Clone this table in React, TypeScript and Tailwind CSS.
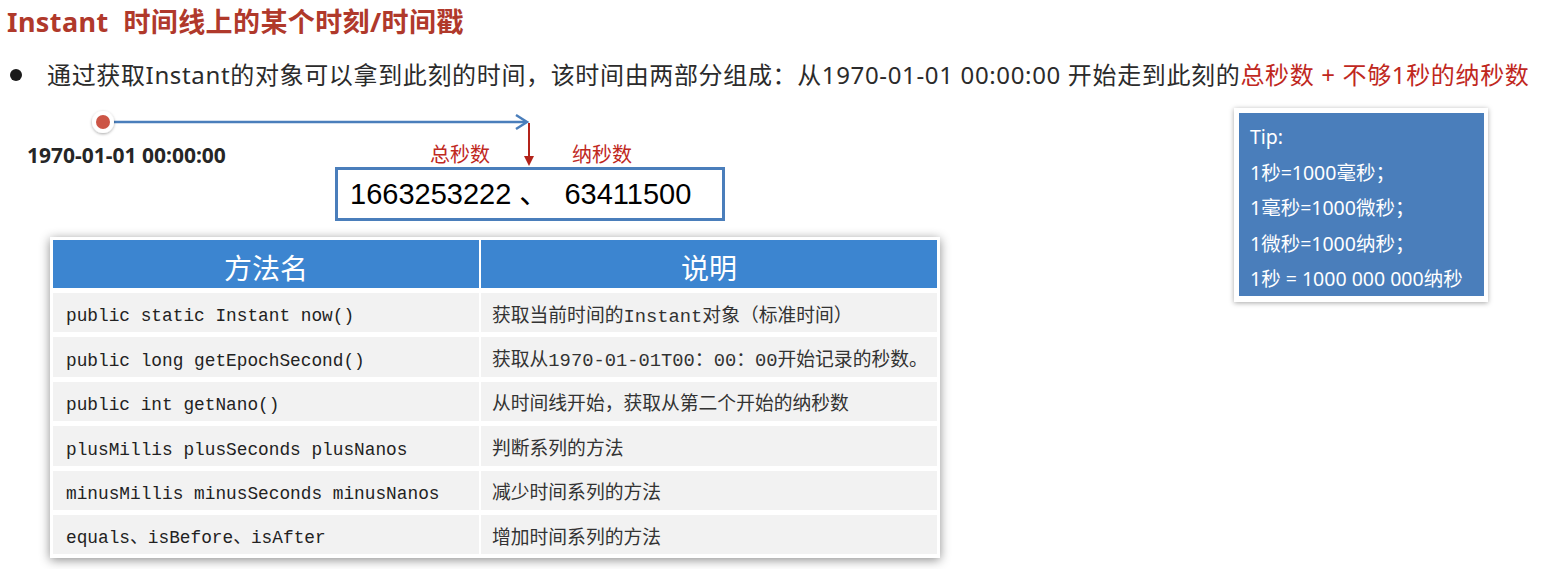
import React from 'react'

const rows: [string, string][] = [
  ['public static Instant now()', '获取当前时间的Instant对象（标准时间）'],
  ['public long getEpochSecond()', '获取从1970-01-01T00：00：00开始记录的秒数。'],
  ['public int getNano()', '从时间线开始，获取从第二个开始的纳秒数'],
  ['plusMillis plusSeconds plusNanos', '判断系列的方法'],
  ['minusMillis minusSeconds minusNanos', '减少时间系列的方法'],
  ['equals、isBefore、isAfter', '增加时间系列的方法'],
]

const tips = ['Tip:', '1秒=1000毫秒；', '1毫秒=1000微秒；', '1微秒=1000纳秒；', '1秒 = 1000 000 000纳秒']

const Timeline = () => (
  <div className="relative h-[137px] w-[760px]">
    <svg className="absolute left-0 top-0" width="760" height="70" viewBox="0 0 760 70">
      <defs>
        <filter id="dotShadow" x="-50%" y="-50%" width="200%" height="200%">
          <feDropShadow dx="0" dy="1" stdDeviation="1.5" floodColor="#000" floodOpacity="0.35" />
        </filter>
      </defs>
      <line x1="112" y1="22" x2="526" y2="22" stroke="#4a7ebb" strokeWidth="2.5" />
      <polyline points="516,15 527,22 516,29" fill="none" stroke="#4a7ebb" strokeWidth="2.5" />
      <line x1="529" y1="23" x2="529" y2="58" stroke="#b3231a" strokeWidth="2" />
      <polygon points="524,56 534,56 529,66" fill="#b3231a" />
      <circle cx="103" cy="22" r="11" fill="#fff" filter="url(#dotShadow)" />
      <circle cx="103" cy="22" r="7" fill="#cc5546" />
    </svg>
    {/* diagram labels */}
    <div className="absolute left-[27px] top-[43px] text-[21px] font-bold leading-[24px] text-[#262626] font-['Noto_Sans',sans-serif]">
      1970-01-01 00:00:00
    </div>
    <div className="absolute left-[430px] top-[41px] text-[20px] leading-[26px] text-[#c0281e] font-['Noto_Sans_CJK_SC',sans-serif]">
      总秒数
    </div>
    <div className="absolute left-[572px] top-[41px] text-[20px] leading-[26px] text-[#c0281e] font-['Noto_Sans_CJK_SC',sans-serif]">
      纳秒数
    </div>
    <div className="absolute left-[335px] top-[67px] flex h-[54px] w-[390px] items-center border-[3px] border-[#4a7ebb] pl-[12px] pt-[2px] text-[29px] whitespace-pre text-black font-['Liberation_Sans','Noto_Sans_CJK_SC',sans-serif]">
      1663253222 、  63411500
    </div>
  </div>
)

const MethodTable = () => (
  <div className="ml-[50px] w-[890px] bg-white p-[3px] shadow-[0_2px_10px_rgba(0,0,0,0.45)]">
    <div className="grid grid-cols-[426px_456px] gap-x-[2px] gap-y-[5px] bg-white pb-[1px]">
      <div className="flex h-[48px] items-center justify-center bg-[#3c85d0] pt-[6px] text-[28px] text-white font-['Noto_Sans_CJK_SC',sans-serif]">
        方法名
      </div>
      <div className="flex h-[48px] items-center justify-center bg-[#3c85d0] pt-[6px] text-[28px] text-white font-['Noto_Sans_CJK_SC',sans-serif]">
        说明
      </div>
      {rows.map(([name, desc]) => (
        <React.Fragment key={name}>
          <div className="flex h-[39.4px] items-center bg-[#f2f2f2] pl-[13px] pt-[8px] text-[17.8px] text-[#222] whitespace-pre font-['Liberation_Mono','Noto_Sans_CJK_SC',monospace]">
            {name}
          </div>
          <div className="flex h-[39.4px] items-center bg-[#f2f2f2] pl-[11px] pt-[8px] text-[18.8px] text-[#333] whitespace-pre font-['Liberation_Mono','Noto_Sans_CJK_SC',monospace]">
            {desc}
          </div>
        </React.Fragment>
      ))}
    </div>
  </div>
)

const TipCard = () => (
  <div className="h-[194px] w-[254px] bg-white p-[5px] pr-[4px] shadow-[0_1px_5px_rgba(0,0,0,0.35)]">
    <div className="h-[183px] bg-[#4a7ebb] pl-[11px] pt-[6px] text-[19.5px] leading-[35.5px] text-white font-['Noto_Sans','Noto_Sans_CJK_SC',sans-serif]">
      {tips.map((t) => (
        <div key={t} className="whitespace-pre">
          {t}
        </div>
      ))}
    </div>
  </div>
)

export default function App() {
  return (
    <div className="h-[569px] w-[1542px] overflow-hidden bg-white">
      <h1 className="pl-[7px] pt-[6px] text-[27px] font-bold leading-[32px] tracking-[0.4px] whitespace-pre text-[#b0392b] font-['Noto_Sans','Noto_Sans_CJK_SC',sans-serif]">
        Instant  时间线上的某个时刻/时间戳
      </h1>

      <div className="mt-[21px] flex h-[32px] items-center pl-[10px]">
        <span className="h-[12px] w-[12px] rounded-full bg-[#1a1a1a]" />
        <p className="ml-[25px] text-[24px] leading-[32px] tracking-[0.65px] whitespace-pre text-[#2b2b2b] font-['Noto_Sans','Noto_Sans_CJK_SC',sans-serif]">
          通过获取Instant的对象可以拿到此刻的时间，该时间由两部分组成：从1970-01-01 00:00:00 开始走到此刻的
          <span className="text-[#c0281e]">总秒数 + 不够1秒的纳秒数</span>
        </p>
      </div>

      <div className="mt-[9px] flex">
        <div className="w-[960px]">
          <Timeline />
          <MethodTable />
        </div>
        <div className="ml-[274px] mt-[8px]">
          <TipCard />
        </div>
      </div>
    </div>
  )
}
